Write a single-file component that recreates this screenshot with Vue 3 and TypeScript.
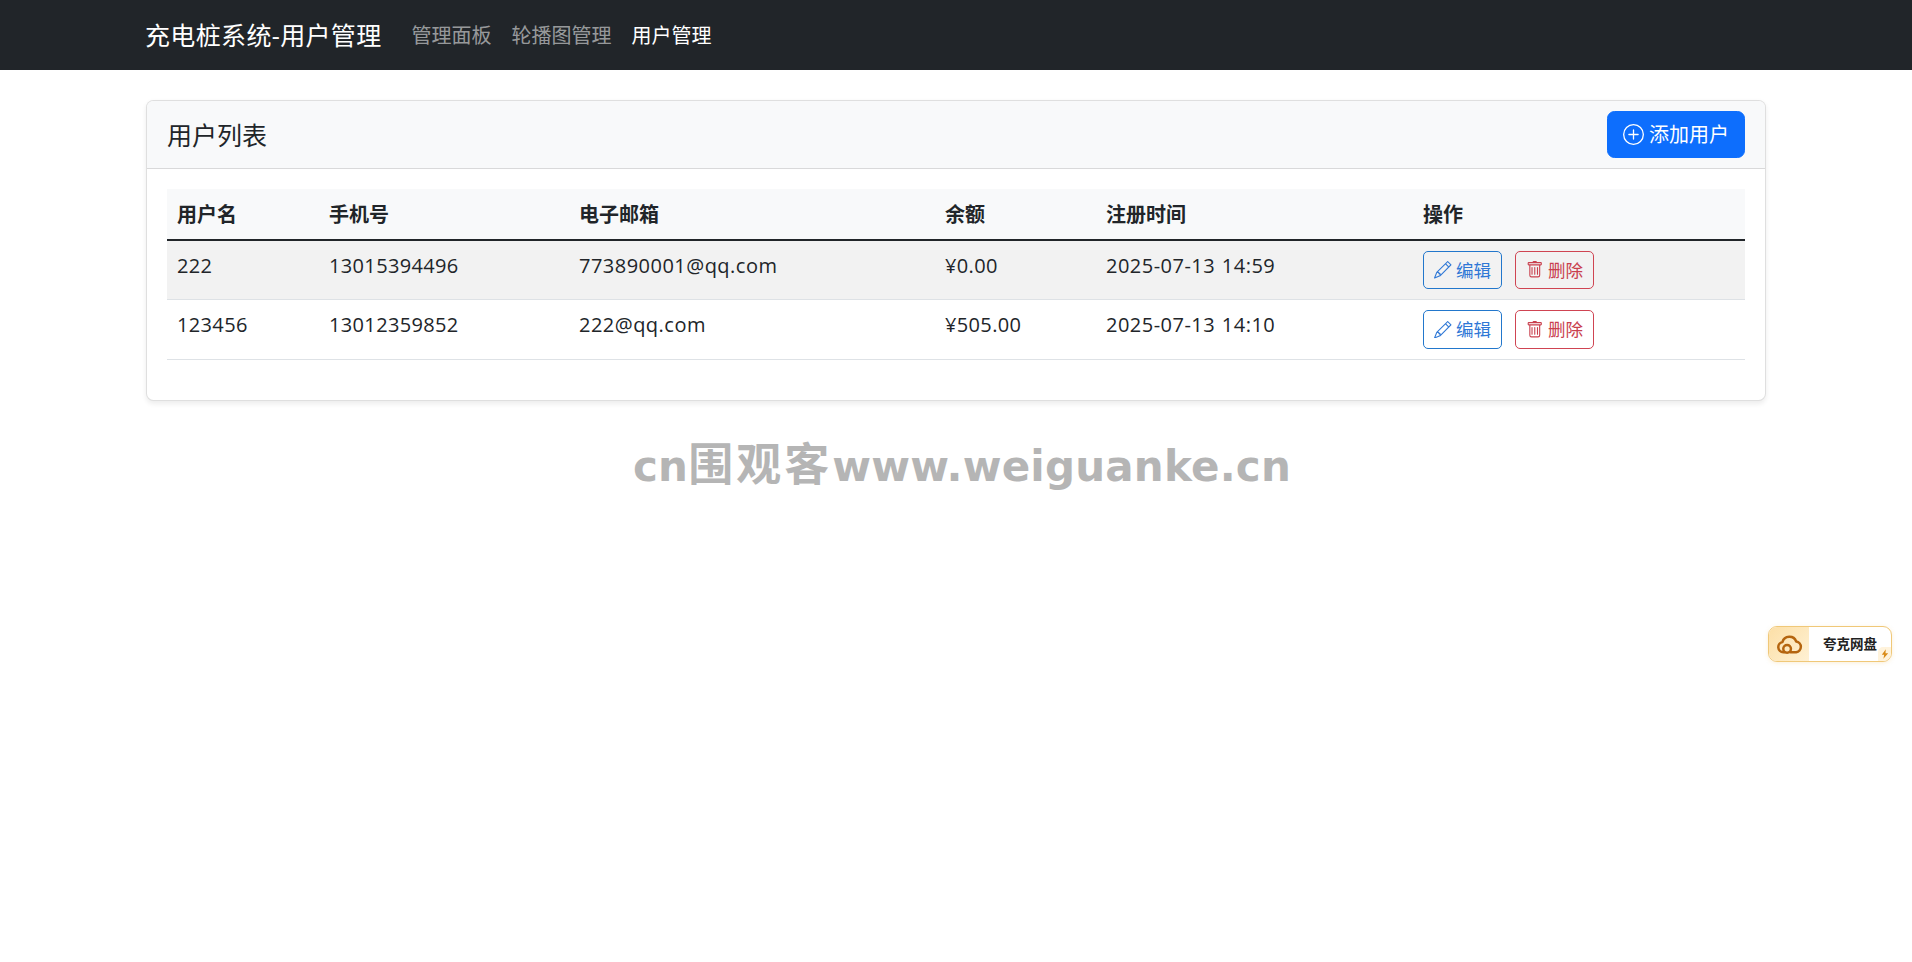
<script setup lang="ts">
interface UserRow {
  name: string
  phone: string
  email: string
  balance: string
  time: string
}
const users: UserRow[] = [
  { name: '222', phone: '13015394496', email: '773890001@qq.com', balance: '¥0.00', time: '2025-07-13 14:59' },
  { name: '123456', phone: '13012359852', email: '222@qq.com', balance: '¥505.00', time: '2025-07-13 14:10' },
]
const heads = ['用户名', '手机号', '电子邮箱', '余额', '注册时间', '操作']
const navs = [
  { label: '管理面板', active: false },
  { label: '轮播图管理', active: false },
  { label: '用户管理', active: true },
]
</script>

<template>
  <div class="page">
    <nav class="navbar">
      <div class="nav-inner">
        <span class="brand">充电桩系统-用户管理</span>
        <a v-for="n in navs" :key="n.label" class="nav-link" :class="{ active: n.active }">{{ n.label }}</a>
      </div>
    </nav>

    <main class="container">
      <section class="card">
        <header class="card-header">
          <h5 class="card-title">用户列表</h5>
          <button class="btn-add">
            <svg class="ico-add" viewBox="0 0 16 16" fill="currentColor">
              <path d="M8 15A7 7 0 1 1 8 1a7 7 0 0 1 0 14zm0 1A8 8 0 1 0 8 0a8 8 0 0 0 0 16z" />
              <path d="M8 4a.5.5 0 0 1 .5.5v3h3a.5.5 0 0 1 0 1h-3v3a.5.5 0 0 1-1 0v-3h-3a.5.5 0 0 1 0-1h3v-3A.5.5 0 0 1 8 4z" />
            </svg>
            添加用户
          </button>
        </header>
        <div class="card-body">
          <table class="table">
            <thead>
              <tr>
                <th v-for="(h, i) in heads" :key="h" :class="'c' + i">{{ h }}</th>
              </tr>
            </thead>
            <tbody>
              <tr v-for="u in users" :key="u.name">
                <td>{{ u.name }}</td>
                <td>{{ u.phone }}</td>
                <td class="wide">{{ u.email }}</td>
                <td>{{ u.balance }}</td>
                <td class="wide">{{ u.time }}</td>
                <td>
                  <div class="actions">
                    <button class="btn-sm edit">
                      <svg class="ico" viewBox="0 0 16 16" fill="currentColor">
                        <path d="M12.146.146a.5.5 0 0 1 .708 0l3 3a.5.5 0 0 1 0 .708l-10 10a.5.5 0 0 1-.168.11l-5 2a.5.5 0 0 1-.65-.65l2-5a.5.5 0 0 1 .11-.168l10-10zM11.207 2.5 13.5 4.793 14.793 3.5 12.5 1.207 11.207 2.5zm1.586 3L10.5 3.207 4 9.707V10h.5a.5.5 0 0 1 .5.5v.5h.5a.5.5 0 0 1 .5.5v.5h.293l6.5-6.5zm-9.761 5.175-.106.106-1.528 3.821 3.821-1.528.106-.106A.5.5 0 0 1 5 12.5V12h-.5a.5.5 0 0 1-.5-.5V11h-.5a.5.5 0 0 1-.468-.325z" />
                      </svg>
                      编辑
                    </button>
                    <button class="btn-sm del">
                      <svg class="ico" viewBox="0 0 16 16" fill="currentColor">
                        <path d="M5.5 5.5A.5.5 0 0 1 6 6v6a.5.5 0 0 1-1 0V6a.5.5 0 0 1 .5-.5zm2.5 0a.5.5 0 0 1 .5.5v6a.5.5 0 0 1-1 0V6a.5.5 0 0 1 .5-.5zm3 .5a.5.5 0 0 0-1 0v6a.5.5 0 0 0 1 0V6z" />
                        <path fill-rule="evenodd" d="M14.5 3a1 1 0 0 1-1 1H13v9a2 2 0 0 1-2 2H5a2 2 0 0 1-2-2V4h-.5a1 1 0 0 1-1-1V2a1 1 0 0 1 1-1H6a1 1 0 0 1 1-1h2a1 1 0 0 1 1 1h3.5a1 1 0 0 1 1 1v1zM4.118 4 4 4.059V13a1 1 0 0 0 1 1h6a1 1 0 0 0 1-1V4.059L11.882 4H4.118zM2.5 3V2h11v1h-11z" />
                      </svg>
                      删除
                    </button>
                  </div>
                </td>
              </tr>
            </tbody>
          </table>
        </div>
      </section>
    </main>

    <div class="watermark">cn<span class="wm-cjk">围观客</span>www.weiguanke.cn</div>

    <aside class="quark">
      <span class="quark-icon">
        <svg viewBox="0 0 28 24" width="27" height="23" fill="none" stroke="#b5650f" stroke-width="2.6" stroke-linecap="round" stroke-linejoin="round">
          <path d="M9 20H7.5A5.3 5.3 0 0 1 6.6 9.5 7.6 7.6 0 0 1 21 8.9 5.6 5.6 0 0 1 21 20h-6" />
          <circle cx="11.5" cy="16.5" r="4" />
        </svg>
      </span>
      <span class="quark-text">夸克网盘</span>
      <span class="quark-tile">
        <svg viewBox="0 0 10 12" width="8" height="10" fill="#d98a16"><path d="M6 0 1 7h3l-1 5 6-7H5.6z" /></svg>
      </span>
    </aside>
  </div>
</template>

<style>
html, body { margin: 0; background: #fff; }
</style>

<style scoped>
.page {
  position: relative;
  min-height: 962px;
  font-family: "Open Sans", "Noto Sans CJK SC", sans-serif;
  font-size: 20px;
  line-height: 30px;
  color: #212529;
  overflow: hidden;
}
.navbar { background: #212529; height: 70px; display: flex; align-items: center; }
.nav-inner { width: 1650px; margin: 0 auto; padding: 1px 15px 0; box-sizing: border-box; display: flex; align-items: center; }
.brand { font-size: 25px; color: #fff; margin-right: 20px; margin-left: -1px; line-height: 37.5px; white-space: nowrap; letter-spacing: 0.35px; }
.nav-link { padding: 10px; color: rgba(255, 255, 255, 0.55); white-space: nowrap; }
.nav-link.active { color: #fff; }
.container { width: 1650px; margin: 0 auto; padding: 30px 15px 0; box-sizing: border-box; }
.card { border: 1.25px solid rgba(0, 0, 0, 0.125); border-radius: 7.5px; box-shadow: 0 2.5px 5px rgba(0, 0, 0, 0.075); background: #fff; }
.card-header {
  display: flex; justify-content: space-between; align-items: center;
  padding: 10px 20px; background: #f8f9fa;
  border-bottom: 1.25px solid rgba(0, 0, 0, 0.125);
  border-radius: 6.25px 6.25px 0 0;
}
.card-title { margin: 0; font-size: 25px; font-weight: 400; line-height: 30px; }
.btn-add {
  display: inline-flex; align-items: center; gap: 5px;
  padding: 7.5px 15px; border: 1.25px solid #0d6efd; border-radius: 7.5px;
  background: #0d6efd; color: #fff; font: inherit; line-height: 30px;
}
.ico-add { width: 21px; height: 21px; }
.card-body { padding: 20px; }
.table { width: 100%; table-layout: fixed; border-collapse: collapse; margin-bottom: 20px; }
th, td { box-sizing: border-box; padding: 10px; text-align: left; vertical-align: top; border-bottom: 1.25px solid #dee2e6; }
td { letter-spacing: 0.35px; }
td.wide { letter-spacing: 0.48px; word-spacing: 1px; }
th { padding: 11px 10px 9px; font-weight: 700; background: #f8f9fa; border-bottom: 2.5px solid #212529; }
tbody tr:nth-child(odd) td { background: #f2f2f2; }
.c0 { width: 152px; }
.c1 { width: 250px; }
.c2 { width: 366px; }
.c3 { width: 161px; }
.c4 { width: 317px; }
.actions { display: flex; gap: 13px; letter-spacing: 0; }
.btn-sm {
  display: inline-flex; align-items: center; gap: 4.5px;
  padding: 3.75px 10px; border-radius: 5px;
  background: transparent; font: inherit; font-size: 17.5px; line-height: 26.25px;
  box-sizing: border-box; height: 39px;
}
tbody tr:first-child .btn-sm { height: 38px; }
.btn-sm.edit { border: 1.25px solid #2277cc; color: #2f78d6; }
.btn-sm.del { border: 1.25px solid #cf4452; color: #c9404e; }
.ico { width: 17.5px; height: 17.5px; }
.watermark {
  position: absolute; left: 0; right: 0; top: 436px;
  padding-left: 12px;
  text-align: center; font-family: "DejaVu Sans", "Noto Sans CJK SC", sans-serif;
  font-weight: 700; font-size: 42px; line-height: 60px; letter-spacing: 0.2px; color: #b5b5b5;
}
.wm-cjk { font-size: 45px; letter-spacing: 3px; }
.quark {
  position: absolute; left: 1768px; top: 626px; width: 124px; height: 36px;
  box-sizing: border-box; border: 1px solid #f0c878; border-radius: 9px;
  background: #fff; display: flex; align-items: center; overflow: hidden;
  box-shadow: 0 1px 4px rgba(240, 190, 100, 0.25);
}
.quark-icon {
  width: 40px; height: 100%; display: flex; align-items: center; justify-content: center;
  background: linear-gradient(135deg, #fcdfa6, #fff1d4);
}
.quark-text { margin-left: 14px; font-size: 13.5px; font-weight: 700; line-height: 20px; color: #222; white-space: nowrap; }
.quark-tile {
  position: absolute; right: 0; bottom: 0; width: 13px; height: 14px;
  display: flex; align-items: center; justify-content: center;
  background: #fff3dc; border-radius: 5px 0 0 0;
}
</style>
